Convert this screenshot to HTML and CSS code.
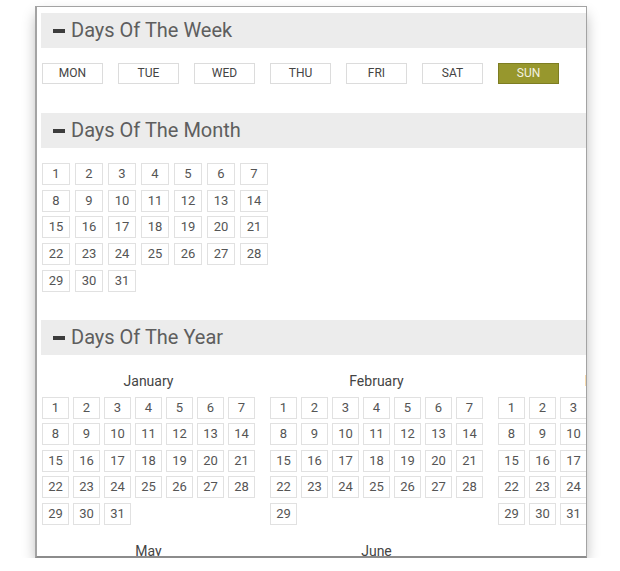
FILE: index.html
```html
<!DOCTYPE html>
<html lang="en">
	<head>
		<meta charset="UTF-8">
		<title>Days picker</title>
		<link rel="stylesheet" href="styles.css">
	</head>
	<body>
		<div class="frame">
			<div class="content">
				<h2 class="bar"><span class="dash"></span>Days Of The Week</h2>
				<ul class="week">
					<li>MON</li>
					<li>TUE</li>
					<li>WED</li>
					<li>THU</li>
					<li>FRI</li>
					<li>SAT</li>
					<li class="on">SUN</li>
				</ul>

				<h2 class="bar"><span class="dash"></span>Days Of The Month</h2>
				<ul class="days month-days" id="monthDays"></ul>

				<h2 class="bar"><span class="dash"></span>Days Of The Year</h2>
				<div class="year" id="year"></div>
			</div>
		</div>
		<script>
			// fill a list with day cells 1..n
			function fill(ul, n) {
				for(var i = 1; i <= n; i++) {
					var li = document.createElement('li');
					li.innerHTML = i;
					ul.appendChild(li);
				}
			}

			fill(document.getElementById('monthDays'), 31);

			// only the months that fall inside the window
			var names = ['January', 'February', 'March', 'April', 'May', 'June', 'July', 'August'];
			var lens = [31, 29, 31, 30, 31, 30, 31, 31];
			var year = document.getElementById('year');

			for(var m = 0; m < names.length; m++) {
				var box = document.createElement('div');
				box.className = 'mon';
				var title = document.createElement('p');
				title.className = 'mon-name';
				title.innerHTML = names[m];
				var ul = document.createElement('ul');
				ul.className = 'days year-days';
				fill(ul, lens[m]);
				box.appendChild(title);
				box.appendChild(ul);
				year.appendChild(box);
			}
		</script>
	</body>
</html>
```

FILE: styles.css
```css
* {
	margin: 0;
	padding: 0;
	list-style: none;
	box-sizing: border-box;
}

body {
	background: #fff;
	font-family: Roboto, "Liberation Sans", Arial, sans-serif;
}

.frame {
	margin: 6px 0 0 35px;
	width: 552px;
	height: 552px;
	border: 1px solid #a3a3a3;
	border-left-width: 2px;
	border-bottom: 2px solid #8c8c8c;
	background: #fff;
	overflow: hidden;
	box-shadow: 0 7px 14px -2px rgba(0, 0, 0, .33);
}

.content {
	padding: 6px 0 0 4px;
}

.bar {
	height: 35px;
	line-height: 35px;
	padding-left: 12px;
	background: #ececec;
	color: #5e5e5e;
	font-size: 20px;
	font-weight: 400;
	display: flex;
	align-items: center;
}

.dash {
	display: inline-block;
	width: 12px;
	height: 4px;
	background: #3c3c3c;
	margin-right: 6px;
	margin-top: 1px;
}

.week {
	display: flex;
	gap: 15px;
	margin: 15px 0 29px 1px;
}

.week li {
	width: 61px;
	height: 21px;
	line-height: 19px;
	border: 1px solid #dcdcdc;
	text-align: center;
	font-size: 12px;
	color: #444;
}

.week li.on {
	background: #97972d;
	border-color: #7d7d22;
	color: #f2f2e0;
}

.days {
	display: grid;
	grid-template-columns: repeat(7, 28px);
	grid-auto-rows: 22px;
	column-gap: 5px;
	row-gap: 4.7px;
}

.days li {
	border: 1px solid #e1e1e1;
	text-align: center;
	line-height: 20px;
	font-size: 13px;
	color: #555;
}

.month-days {
	margin: 15px 0 28px 1px;
}

.year {
	display: grid;
	grid-template-columns: repeat(4, 213px);
	column-gap: 15px;
	row-gap: 16px;
	padding: 16px 0 0 1px;
}

.mon-name {
	height: 20px;
	line-height: 20px;
	margin-bottom: 6px;
	text-align: center;
	font-size: 14px;
	color: #444;
}

.year-days {
	grid-template-columns: repeat(7, 27px);
	column-gap: 4px;
	row-gap: 4.5px;
}
```
